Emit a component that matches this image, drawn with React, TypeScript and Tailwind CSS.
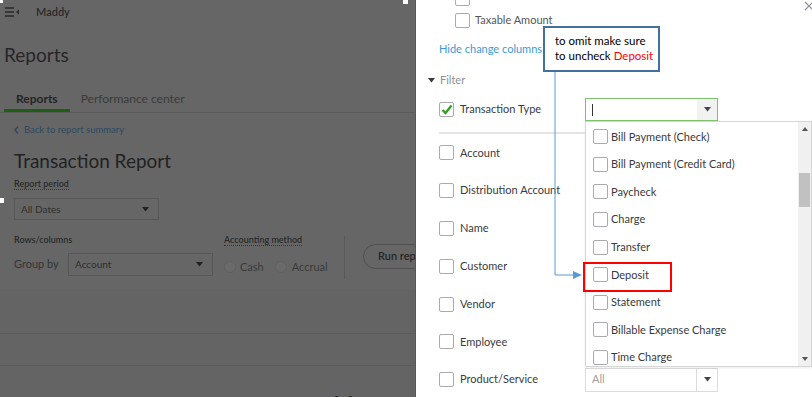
import React from "react";

const Box = ({ checked }: { checked?: boolean }) => (
  <span className="w-[15px] h-[15px] shrink-0 rounded-[2px] border border-[#a9abaf] bg-white flex items-center justify-center">
    {checked && (
      <svg width="12" height="11" viewBox="0 0 12 11">
        <path d="M1.5 6 L4.5 9 L10.5 1.5" fill="none" stroke="#2ca01c" strokeWidth="2.2" />
      </svg>
    )}
  </span>
);

const Caret = ({ color = "#444" }: { color?: string }) => (
  <svg width="7" height="5" viewBox="0 0 7 5">
    <path d="M0 0 H7 L3.5 4.5 Z" fill={color} />
  </svg>
);

const filterRows = ["Account", "Distribution Account", "Name", "Customer", "Vendor", "Employee"];

const txTypes = [
  "Bill Payment (Check)",
  "Bill Payment (Credit Card)",
  "Paycheck",
  "Charge",
  "Transfer",
  "Deposit",
  "Statement",
  "Billable Expense Charge",
  "Time Charge",
];

function DimmedReport() {
  return (
    <div className="relative w-[416px] shrink-0 h-full bg-[#666666] border-r border-[#575757] overflow-hidden font-['Lato',sans-serif] text-[#262626] flex flex-col">
      {/* selection handles from the capture */}
      <span className="absolute left-0 top-0 w-[3px] h-[3px] bg-white" />
      <span className="absolute left-[403px] top-0 w-[5px] h-[4px] bg-white" />
      <span className="absolute left-0 top-[198px] w-[4px] h-[5px] bg-white" />

      <div className="pt-[5px]">
        {/* Top bar */}
        <div className="h-[14px] flex items-center pl-[5px]">
          <svg width="14" height="10" viewBox="0 0 14 10">
            <path d="M0 1 H9 M0 5 H9 M0 9 H9" stroke="#2a2a2a" strokeWidth="1.3" />
            <path d="M14 2.5 L11 5 L14 7.5 Z" fill="#2a2a2a" />
          </svg>
          <span className="ml-[17px] text-[11px] font-semibold text-[#2a2a2a]">Maddy</span>
        </div>

        <h1 className="mt-[24px] pl-[4px] text-[19px] leading-[24px] text-[#262626]">Reports</h1>

        {/* Tabs */}
        <div className="mt-[24px] flex border-b border-[#5b5b5b]">
          <div className="ml-[4px] px-[12px] pb-[2px] border-b-[3px] border-[#1d5e14] text-[12px] leading-[16px] font-bold text-[#242424]">
            Reports
          </div>
          <div className="px-[11px] text-[12px] leading-[16px] text-[#3a3a3a]">Performance center</div>
        </div>

        <div className="mt-[11px] pl-[14px] flex items-center gap-[5px] text-[9.5px] leading-[12px] text-[#2b4a60]">
          <svg width="5" height="8" viewBox="0 0 5 8">
            <path d="M4 0.5 L1 4 L4 7.5" fill="none" stroke="#2b4a60" strokeWidth="1.4" />
          </svg>
          <span>Back to report summary</span>
        </div>

        <div className="mt-[13px] pl-[14px] text-[19px] leading-[24px] text-[#222]">Transaction Report</div>

        <div className="mt-[5px] pl-[14px] text-[9px] leading-[12px] font-semibold text-[#2a2a2a]">
          <span className="border-b border-dotted border-[#333]">Report period</span>
        </div>

        <div className="mt-[8px] ml-[14px] w-[145px] h-[22px] border border-[#575757] flex items-center justify-between pl-[6px] pr-[9px] text-[10px] text-[#2e2e2e]">
          <span>All Dates</span>
          <Caret color="#222" />
        </div>

        {/* Rows/columns + accounting method */}
        <div className="mt-[14px] pl-[14px] pb-[10px] flex items-start">
          <div className="w-[199px] shrink-0">
            <div className="text-[9px] leading-[12px] font-semibold text-[#2a2a2a]">Rows/columns</div>
            <div className="mt-[7px] flex items-center">
              <span className="w-[54px] text-[11px] text-[#353535]">Group by</span>
              <div className="w-[145px] h-[23px] border border-[#575757] flex items-center justify-between pl-[6px] pr-[9px] text-[10px] text-[#2e2e2e]">
                <span>Account</span>
                <Caret color="#222" />
              </div>
            </div>
          </div>
          <div className="ml-[11px] w-[120px] shrink-0">
            <div className="text-[9px] leading-[12px] font-semibold text-[#2a2a2a]">
              <span className="border-b border-dotted border-[#333]">Accounting method</span>
            </div>
            <div className="mt-[13px] flex items-center text-[11px] text-[#3a3a3a]">
              <span className="w-[12px] h-[12px] rounded-full border border-[#606060] bg-[#6a6a6a]" />
              <span className="ml-[4px]">Cash</span>
              <span className="ml-[11px] w-[12px] h-[12px] rounded-full border border-[#606060] bg-[#6a6a6a]" />
              <span className="ml-[5px]">Accrual</span>
            </div>
          </div>
          <div className="mt-[2px] w-px h-[43px] shrink-0 bg-[#5a5a5a]" />
          <div className="ml-[18px] mt-[10px] h-[25px] w-[90px] shrink-0 rounded-full border border-[#505050] flex items-center pl-[14px] text-[11px] font-semibold text-[#262626] whitespace-nowrap">
            Run report
          </div>
        </div>
      </div>

      {/* lower report body */}
      <div className="flex-1 bg-[#646464]">
        <div className="h-[45px] border-b border-[#5c5c5c]" />
        <div className="h-[32px] border-b border-[#5c5c5c]" />
        <div className="mt-[24px] pl-[290px] text-[25px] leading-[30px] text-[#1f1f1f]">Maddy</div>
      </div>
    </div>
  );
}

function FilterPanel() {
  return (
    <div className="relative flex-1 h-full bg-white overflow-hidden font-['Lato',sans-serif] text-[#393a3d]">
      <div className="pl-[23px] flex flex-col">
        <div className="-mt-[9px] ml-[16px]">
          <Box />
        </div>
        <div className="mt-[7px] ml-[16px] h-[15px] flex items-center gap-[5px] text-[11px] text-[#555]">
          <Box />
          <span>Taxable Amount</span>
        </div>
        <div className="mt-[14px] h-[14px] leading-[14px] text-[11px] text-[#3b9ad9]">Hide change columns</div>
        <div className="mt-[17px] h-[14px] -ml-[11px] flex items-center gap-[5px] text-[11px] text-[#8d9096]">
          <Caret color="#393a3d" />
          <span>Filter</span>
        </div>

        {/* Transaction type */}
        <div className="mt-[11px] h-[23px] flex items-center">
          <div className="w-[146px] flex items-center gap-[6px] text-[11px]">
            <Box checked />
            <span>Transaction Type</span>
          </div>
          <div className="w-[133px] h-[23px] border border-[#7cc36c] flex">
            <div className="flex-1 flex items-center pl-[6px]">
              <span className="w-px h-[12px] bg-[#333]" />
            </div>
            <div className="w-[20px] bg-[#f2f2f2] flex items-center justify-center">
              <Caret />
            </div>
          </div>
        </div>

        <div className="mt-[11px] h-[2px] bg-[#e4e4e4]" />

        {filterRows.map((r) => (
          <div key={r} className="h-[37.8px] flex items-center gap-[6px] text-[11px]">
            <Box />
            <span>{r}</span>
          </div>
        ))}
        <div className="h-[37.8px] flex items-center">
          <div className="w-[146px] flex items-center gap-[6px] text-[11px]">
            <Box />
            <span>Product/Service</span>
          </div>
          <div className="w-[133px] h-[24px] border border-[#dcdcdc] flex text-[11px]">
            <span className="flex-1 flex items-center pl-[6px] text-[#a0a0a0]">All</span>
            <span className="w-[21px] border-l border-[#dcdcdc] flex items-center justify-center">
              <Caret />
            </span>
          </div>
        </div>
      </div>

      {/* open dropdown list */}
      <div className="absolute left-[169px] top-[121px] w-[227px] h-[246px] bg-white border border-[#d6d6d6] flex shadow-[0_1px_2px_rgba(0,0,0,0.08)]">
        <div className="flex-1 overflow-hidden pt-[1px]">
          {txTypes.map((t) => (
            <div key={t} className="h-[27.6px] flex items-center pl-[7px] gap-[3px] text-[11px] text-[#393a3d]">
              <Box />
              <span>{t}</span>
            </div>
          ))}
        </div>
        <div className="w-[13px] bg-[#f0f0f0] flex flex-col items-center">
          <svg className="mt-[5px]" width="6" height="4" viewBox="0 0 6 4">
            <path d="M0 4 H6 L3 0 Z" fill="#555" />
          </svg>
          <div className="mt-[42px] w-[11px] h-[34px] bg-[#c1c1c1]" />
          <div className="flex-1" />
          <svg className="mb-[5px]" width="6" height="4" viewBox="0 0 6 4">
            <path d="M0 0 H6 L3 4 Z" fill="#555" />
          </svg>
        </div>
      </div>

      {/* close button, cut at the edge */}
      <svg className="absolute left-[388px] top-[1px]" width="10" height="10" viewBox="0 0 10 10">
        <path d="M1 1 L9 9 M9 1 L1 9" stroke="#8d9096" strokeWidth="1.2" />
      </svg>

      {/* annotation */}
      <div className="absolute left-[127px] top-[26px] w-[117px] h-[46px] bg-white border-2 border-[#41719c] pl-[10px] pt-[5px] font-['Lato',sans-serif] text-[11.5px] leading-[15px] text-black">
        <div>to omit make sure</div>
        <div>
          to uncheck <span className="text-[#ff0000]">Deposit</span>
        </div>
      </div>
      <div className="absolute left-[167px] top-[262px] w-[89px] h-[30px] border-2 border-[#ff0000]" />
      <svg className="absolute left-0 top-0 pointer-events-none" width="396" height="397">
        <path d="M139 72 V275 H158" fill="none" stroke="#5b9bd5" strokeWidth="1" />
        <path d="M157 271 L166 275 L157 279 Z" fill="#5b9bd5" />
      </svg>
    </div>
  );
}

export default function App() {
  return (
    <div className="w-[812px] h-[397px] flex overflow-hidden bg-white">
      <DimmedReport />
      <FilterPanel />
    </div>
  );
}
